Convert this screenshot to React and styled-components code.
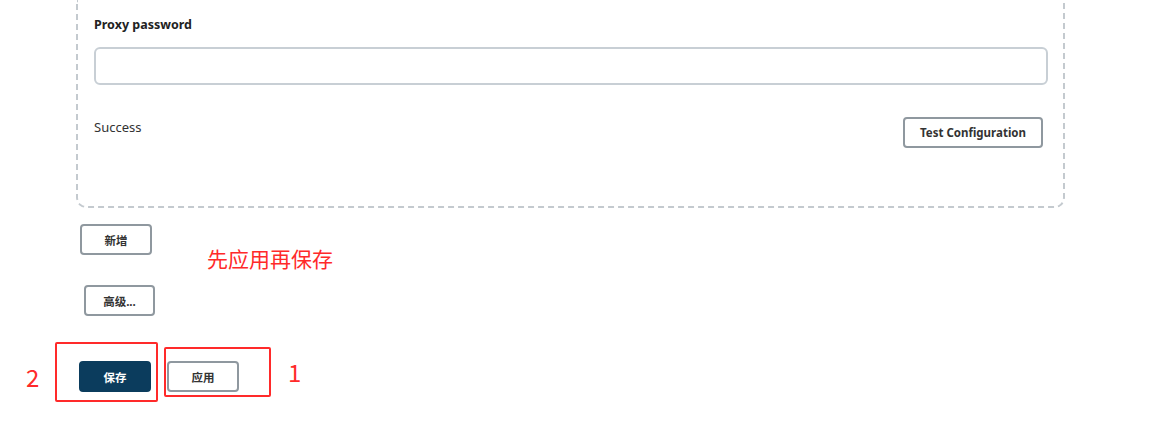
import React from "react";
import styled, { createGlobalStyle } from "styled-components";

const Global = createGlobalStyle`
  html, body {
    margin: 0;
    background: #fff;
    font-family: "Noto Sans", "Open Sans", "Noto Sans CJK SC", sans-serif;
    color: #333;
  }
`;

const Page = styled.div`
  position: relative;
  width: 1153px;
  height: 428px;
  overflow: hidden;
  padding-left: 76px;
  box-sizing: border-box;
`;

const Card = styled.div`
  width: 989px;
  box-sizing: border-box;
  border: 2px dashed #c4cacf;
  border-top: none;
  border-radius: 0 0 10px 10px;
  padding: 16px 16px 58px 16px;
`;

const Label = styled.div`
  font-size: 12.5px;
  font-weight: 700;
  color: #222;
  line-height: 18px;
  margin-bottom: 13px;
`;

const Input = styled.input`
  display: block;
  width: 954px;
  height: 38px;
  box-sizing: border-box;
  border: 2px solid #c8cfd5;
  border-radius: 6px;
  outline: none;
  background: #fff;
`;

const Row = styled.div`
  display: flex;
  justify-content: space-between;
  align-items: flex-start;
  margin-top: 32px;
  padding-right: 4px;
`;

const Status = styled.div`
  font-size: 13px;
  color: #333;
  line-height: 20px;
`;

const Button = styled.button`
  height: 31px;
  min-width: ${(p) => p.$w || 72}px;
  box-sizing: border-box;
  padding: 0 14px;
  border: 2px solid ${(p) => (p.$primary ? "#0b3c5d" : "#8f989f")};
  border-radius: 4px;
  background: ${(p) => (p.$primary ? "#0b3c5d" : "#fff")};
  color: ${(p) => (p.$primary ? "#fff" : "#333")};
  font-family: "Noto Sans", "Noto Sans CJK SC", sans-serif;
  font-size: 11.5px;
  font-weight: 700;
  cursor: pointer;
`;

const Below = styled.div`
  display: flex;
  flex-direction: column;
  align-items: flex-start;
  padding-top: 16px;
`;

const Line = styled.div`
  display: flex;
  gap: 16px;
  padding-left: ${(p) => p.$indent || 0}px;
  margin-top: ${(p) => p.$top || 0}px;
`;

const Note = styled.div`
  position: absolute;
  left: ${(p) => p.$x}px;
  top: ${(p) => p.$y}px;
  color: #ff2a2a;
  font-family: "Noto Sans CJK SC", "Noto Sans", sans-serif;
  font-size: ${(p) => p.$size || 21}px;
  line-height: 1;
`;

const RedBox = styled.div`
  position: absolute;
  left: ${(p) => p.$x}px;
  top: ${(p) => p.$y}px;
  width: ${(p) => p.$w}px;
  height: ${(p) => p.$h}px;
  border: 2px solid #ff2a2a;
  border-radius: 2px;
  box-sizing: border-box;
  pointer-events: none;
`;

export default function App() {
  return (
    <Page>
      <Global />
      <Card>
        <Label>Proxy password</Label>
        <Input type="password" />
        <Row>
          <Status>Success</Status>
          <Button $w={140}>Test Configuration</Button>
        </Row>
      </Card>
      <Below>
        <Line $indent={4}>
          <Button>新增</Button>
        </Line>
        <Line $indent={8} $top={30}>
          <Button $w={71}>高级...</Button>
        </Line>
        <Line $indent={3} $top={45}>
          <Button $primary>保存</Button>
          <Button>应用</Button>
        </Line>
      </Below>

      <Note $x={207} $y={248}>先应用再保存</Note>
      <RedBox $x={55} $y={342} $w={103} $h={60} />
      <RedBox $x={164} $y={347} $w={107} $h={50} />
      <Note $x={26} $y={365} $size={24}>2</Note>
      <Note $x={288} $y={360} $size={24}>1</Note>
    </Page>
  );
}
